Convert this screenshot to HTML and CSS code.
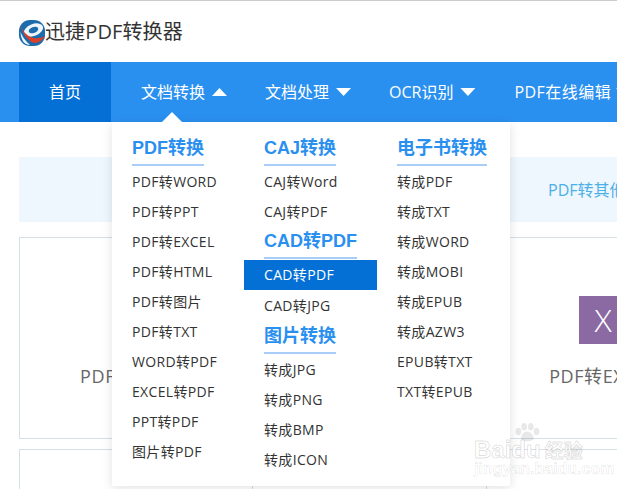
FILE: index.html
```html
<!DOCTYPE html>
<html lang="zh-CN">
<head>
<meta charset="utf-8">
<title>迅捷PDF转换器</title>
<link rel="stylesheet" href="styles.css">
</head>
<body>
<div class="page">
  <header class="header">
    <svg class="logo" viewBox="0 0 26 26" aria-hidden="true">
      <rect width="26" height="26" rx="11" fill="#1c6cab"/>
      <ellipse cx="14.500" cy="10" rx="10" ry="6" transform="rotate(-22 14.500 10)" fill="#eef6fb"/>
      <ellipse cx="14.500" cy="10" rx="5" ry="3" transform="rotate(-22 14.500 10)" fill="#1c6cab"/>
      <path d="M1 5 C4 12 9 17 15 18 C19 18.500 23 18 26 16 C24 20 20 23 15 23 C9 21 4 14 1 5Z" fill="#d9402a"/>
      <path d="M1.500 12 C4 18 7 21 11 25 C6 25 2 21 1.500 12Z" fill="#eef6fb"/>
    </svg>
    <span class="brand">迅捷PDF转换器</span>
  </header>

  <nav class="nav">
    <a class="nav-home">首页</a>
    <ul class="nav-list">
      <li class="nav-item"><span>文档转换</span><i class="caret caret-up"></i></li>
      <li class="nav-item"><span>文档处理</span><i class="caret"></i></li>
      <li class="nav-item"><span>OCR识别</span><i class="caret"></i></li>
      <li class="nav-item nav-item-wide"><span>PDF在线编辑</span><i class="caret"></i></li>
    </ul>
  </nav>

  <main class="main">
    <div class="tabbar"><span>PDF转其他</span></div>
    <div class="cards">
      <div class="card"><div class="file-icon icon-word">W</div><p>PDF转WORD</p></div>
      <div class="card"><div class="file-icon icon-ppt">P</div><p>PDF转PPT</p></div>
      <div class="card"><div class="file-icon icon-excel">X</div><p>PDF转EXCEL</p></div>
      <div class="card"></div>
      <div class="card"></div>
      <div class="card"></div>
    </div>
  </main>

  <div class="dropdown">
    <div class="menu-col">
      <h3 class="menu-head"><span>PDF转换</span></h3>
      <a class="menu-link">PDF转WORD</a>
      <a class="menu-link">PDF转PPT</a>
      <a class="menu-link">PDF转EXCEL</a>
      <a class="menu-link">PDF转HTML</a>
      <a class="menu-link">PDF转图片</a>
      <a class="menu-link">PDF转TXT</a>
      <a class="menu-link">WORD转PDF</a>
      <a class="menu-link">EXCEL转PDF</a>
      <a class="menu-link">PPT转PDF</a>
      <a class="menu-link">图片转PDF</a>
    </div>
    <div class="menu-col">
      <h3 class="menu-head"><span>CAJ转换</span></h3>
      <a class="menu-link">CAJ转Word</a>
      <a class="menu-link">CAJ转PDF</a>
      <h3 class="menu-head menu-head-sub"><span>CAD转PDF</span></h3>
      <a class="menu-link menu-link-active">CAD转PDF</a>
      <a class="menu-link menu-link-after">CAD转JPG</a>
      <h3 class="menu-head menu-head-sub2"><span>图片转换</span></h3>
      <a class="menu-link">转成JPG</a>
      <a class="menu-link">转成PNG</a>
      <a class="menu-link">转成BMP</a>
      <a class="menu-link">转成ICON</a>
    </div>
    <div class="menu-col">
      <h3 class="menu-head"><span>电子书转换</span></h3>
      <a class="menu-link">转成PDF</a>
      <a class="menu-link">转成TXT</a>
      <a class="menu-link">转成WORD</a>
      <a class="menu-link">转成MOBI</a>
      <a class="menu-link">转成EPUB</a>
      <a class="menu-link">转成AZW3</a>
      <a class="menu-link">EPUB转TXT</a>
      <a class="menu-link">TXT转EPUB</a>
    </div>
  </div>

  <div class="watermark" aria-hidden="true">
    <svg class="paw" viewBox="0 0 26 20">
      <ellipse cx="4" cy="9" rx="3" ry="4"/>
      <ellipse cx="10" cy="4" rx="3" ry="4"/>
      <ellipse cx="17" cy="4" rx="3" ry="4"/>
      <ellipse cx="23" cy="9" rx="3" ry="4"/>
      <path d="M13 9 C9 9 6 14 7 17 C9 20 17 20 20 17 C21 14 17 9 13 9Z"/>
    </svg>
    <div class="wm-row"><span class="wm-logo">Baidu</span><span class="wm-cn">经验</span></div>
    <div class="wm-url">jingyan.baidu.com</div>
  </div>
</div>
</body>
</html>
```
FILE: styles.css
```css
* { box-sizing: border-box; }
html, body { margin: 0; padding: 0; }
body {
  font-family: "Open Sans", "Noto Sans CJK SC", sans-serif;
  color: #333;
  background: #fff;
}
.page {
  position: relative;
  width: 617px;
  height: 489px;
  overflow: hidden;
  border-top: 1px solid #ccc;
}
.header {
  height: 61px;
  display: flex;
  align-items: center;
  padding: 0 0 0 19px;
}
.logo { width: 26px; height: 26px; flex: none; margin-top: 2px; }
.brand { font-size: 20px; line-height: 26px; color: #333; white-space: nowrap; letter-spacing: .12px; }

.nav {
  height: 60px;
  background: #2a90f0;
  display: flex;
  padding-left: 19px;
  color: #fff;
  font-size: 16px;
  line-height: 60px;
  white-space: nowrap;
}
.nav-home {
  width: 92px;
  flex: none;
  text-align: center;
  background: #046fd5;
}
.nav-list {
  display: flex;
  gap: 38px;
  list-style: none;
  margin: 0;
  padding: 0 0 0 30px;
}
.nav-item { display: flex; align-items: center; gap: 7px; }
.nav-item-wide { gap: 5px; margin-left: 1px; letter-spacing: .45px; }
.caret {
  width: 15px;
  height: 8px;
  flex: none;
  background: #fff;
  clip-path: polygon(0 0, 100% 0, 50% 100%);
}
.caret-up { clip-path: polygon(50% 0, 100% 100%, 0 100%); }

.main { padding: 35px 0 0 19px; width: 760px; }
.tabbar {
  height: 65px;
  background: #eef7fd;
  color: #4cb0e8;
  font-size: 16px;
  line-height: 67px;
  padding-left: 529px;
}
.cards {
  margin-top: 15px;
  display: grid;
  grid-template-columns: 234px 234px 234px;
  grid-auto-rows: 202px;
  row-gap: 10px;
}
.card {
  border: 1px solid #d5e0e5;
  border-left: 0;
  display: flex;
  flex-direction: column;
  align-items: center;
  padding: 58px 1px 0 0;
}
.card:nth-child(3n+1) { border-left: 1px solid #d5e0e5; }
.card p { margin: 20px 0 0; font-size: 18px; line-height: 24px; color: #666; letter-spacing: .6px; white-space: nowrap; }
.file-icon {
  width: 48px;
  height: 48px;
  color: #fff;
  font-size: 32px;
  font-weight: 300;
  line-height: 48px;
  text-align: center;
}
.icon-word { background: #2a7bd0; }
.icon-ppt { background: #d9602f; }
.icon-excel { background: #8b6aa3; }

.dropdown {
  position: absolute;
  left: 112px;
  top: 121px;
  width: 398px;
  height: 364px;
  background: #fff;
  box-shadow: 0 2px 10px rgba(0, 0, 0, .12);
  display: grid;
  grid-template-columns: 132px 133px 133px;
}
.dropdown::before {
  content: "";
  position: absolute;
  left: 50px;
  top: -10px;
  border-left: 10px solid transparent;
  border-right: 10px solid transparent;
  border-bottom: 10px solid #fff;
}
.menu-col { padding-top: 13px; }
.menu-head {
  margin: 0;
  padding-left: 20px;
  height: 32px;
  font-family: "Liberation Sans", "Noto Sans CJK SC", sans-serif;
  font-size: 18px;
  font-weight: 700;
  line-height: 26px;
  color: #2a90f0;
}
.menu-head span {
  display: inline-block;
  height: 31px;
  border-bottom: 2px solid #a8cdf7;
  white-space: nowrap;
}
.menu-head-sub { height: 33px; padding-top: 1px; }
.menu-head-sub span { height: 31px; }
.menu-head-sub2 { height: 34px; padding-top: 2px; }
.menu-link {
  display: block;
  height: 30px;
  padding-left: 20px;
  font-size: 14px;
  line-height: 30px;
  color: #333;
  white-space: nowrap;
  letter-spacing: .33px;
}
.menu-link-active { background: #046fd5; color: #fff; }
.menu-link-after { margin-top: 1px; }

.watermark {
  position: absolute;
  left: 474px;
  top: 422px;
  width: 112px;
  color: #fff;
  -webkit-text-stroke: 1px rgba(0, 0, 0, .13);
}
.paw {
  display: block;
  width: 26px;
  height: 19px;
  margin-left: 40px;
  fill: rgba(0, 0, 0, .09);
}
.wm-row { display: flex; align-items: center; height: 21px; margin-top: -3px; }
.wm-logo { font: 700 24px/21px "Liberation Sans", sans-serif; }
.wm-cn { font: 700 19px/21px "Noto Sans CJK SC", sans-serif; margin-left: 4px; }
.wm-url { font: 700 16px/16px "Liberation Sans", sans-serif; margin-top: 1px; white-space: nowrap; -webkit-text-stroke: .6px rgba(0, 0, 0, .12); }
```
